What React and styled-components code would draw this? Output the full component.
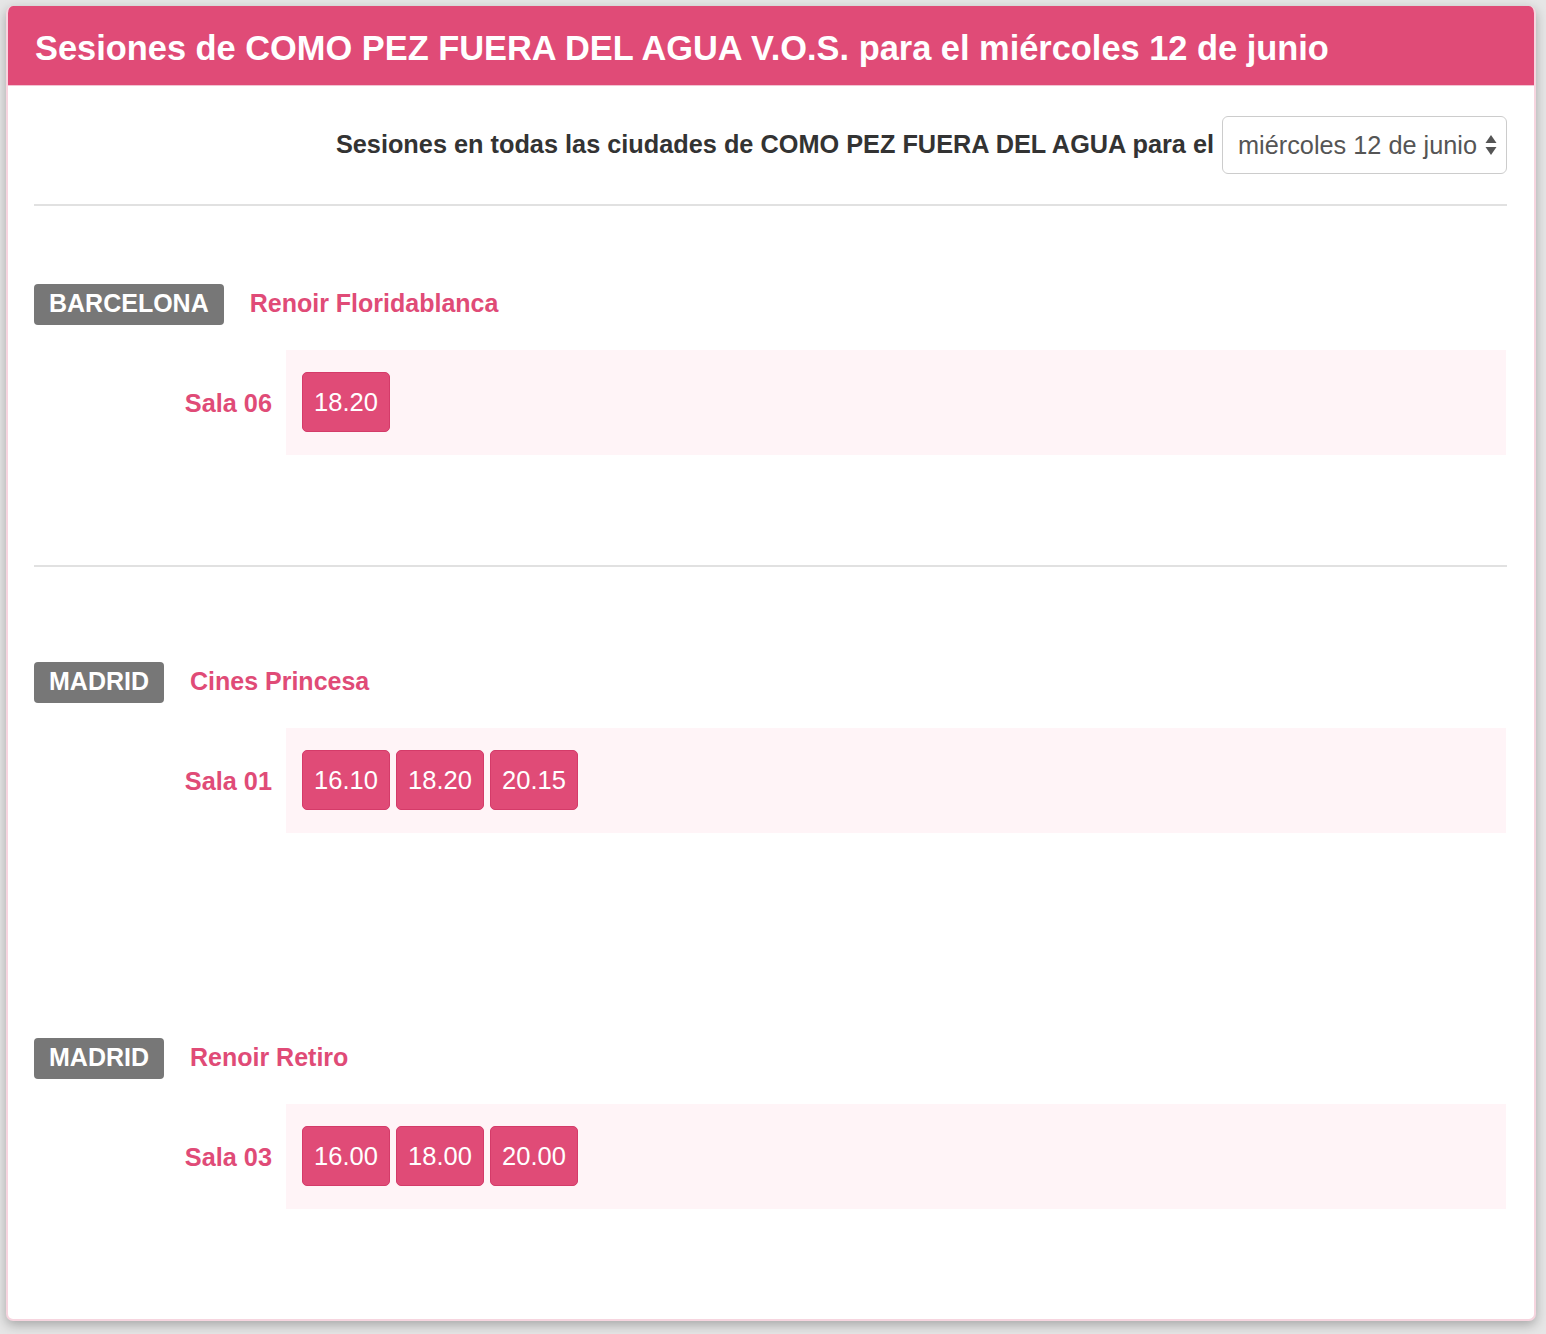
import React from "react";
import styled, { createGlobalStyle } from "styled-components";

const Global = createGlobalStyle`
  html, body { margin: 0; padding: 0; background: #e6e6e6; }
  body { font-family: "Liberation Sans", Arial, Helvetica, sans-serif; }
  * { box-sizing: border-box; }
`;

const Page = styled.div`
  padding: 6px 10px 14px 6px;
  min-height: 1334px;
`;

const Card = styled.div`
  width: 1530px;
  background: #ffffff;
  border: 2px solid #f6d5df;
  border-top: none;
  border-radius: 7px;
  box-shadow: 0 4px 12px rgba(0, 0, 0, 0.28);
  overflow: hidden;
`;

const Header = styled.div`
  background: #e04b77;
  height: 80px;
  display: flex;
  align-items: center;
  border-bottom: 1px solid #f3c3d2;
  margin: 0 -2px;
  padding: 0 27px 0 29px;
`;

const Title = styled.h1`
  margin: 0;
  color: #ffffff;
  font-size: 34.4px;
  font-weight: 700;
  padding-top: 6px;
`;

const Body = styled.div`
  padding: 0 27px 0 26px;
`;

const FilterRow = styled.div`
  display: flex;
  justify-content: flex-end;
  align-items: center;
  gap: 8px;
  padding-top: 30px;
  margin-bottom: 30px;
`;

const FilterLabel = styled.span`
  color: #333333;
  font-size: 25.3px;
  font-weight: 700;
  padding-bottom: 2px;
`;

const Select = styled.div`
  height: 58px;
  width: 285px;
  border: 1px solid #cccccc;
  border-radius: 6px;
  background: #fff;
  display: flex;
  align-items: center;
  justify-content: space-between;
  padding: 0 9px 0 15px;
  color: #555555;
  font-size: 25.3px;
`;

const Divider = styled.hr`
  margin: 0;
  border: none;
  height: 2px;
  background: #e1e1e1;
`;

const Section = styled.section`
  padding-top: ${(p) => p.$top}px;
  padding-bottom: 110px;
`;

const CinemaLine = styled.div`
  display: flex;
  align-items: center;
  gap: 26px;
`;

const City = styled.span`
  display: inline-flex;
  align-items: center;
  height: 41px;
  padding: 0 15px 2px 15px;
  background: #777777;
  color: #ffffff;
  font-size: 25px;
  font-weight: 700;
  border-radius: 4px;
`;

const CinemaLink = styled.a`
  color: #e04b77;
  font-size: 25px;
  font-weight: 700;
  text-decoration: none;
  padding-bottom: 2px;
`;

const SalaRow = styled.div`
  display: grid;
  grid-template-columns: 252px 1fr;
  margin-top: 25px;
  margin-right: 1px;
`;

const SalaName = styled.div`
  color: #e04b77;
  font-size: 25.3px;
  font-weight: 700;
  padding-right: 14px;
  display: flex;
  align-items: center;
  justify-content: flex-end;
  padding-top: 2px;
`;

const Times = styled.div`
  background: #fff4f7;
  height: 105px;
  padding: 22px 16px 23px;
  display: flex;
  gap: 6px;
`;

const TimeButton = styled.span`
  width: 88px;
  height: 60px;
  background: #e04b77;
  border: 1px solid #d43b69;
  border-radius: 5px;
  color: #ffffff;
  font-size: 25.5px;
  display: flex;
  align-items: center;
  justify-content: center;
  padding-bottom: 0;
`;

const Arrows = () => (
  <svg width="12" height="22" viewBox="0 0 12 22">
    <path d="M6 1 L11.5 9 L0.5 9 Z" fill="#555" />
    <path d="M6 21 L11.5 13 L0.5 13 Z" fill="#555" />
  </svg>
);

const data = [
  { city: "BARCELONA", cinema: "Renoir Floridablanca", sala: "Sala 06", times: ["18.20"] },
  { city: "MADRID", cinema: "Cines Princesa", sala: "Sala 01", times: ["16.10", "18.20", "20.15"] },
  { city: "MADRID", cinema: "Renoir Retiro", sala: "Sala 03", times: ["16.00", "18.00", "20.00"] },
];

export default function App() {
  return (
    <>
      <Global />
      <Page>
        <Card>
          <Header>
            <Title>Sesiones de COMO PEZ FUERA DEL AGUA V.O.S. para el miércoles 12 de junio</Title>
          </Header>
          <Body>
            <FilterRow>
              <FilterLabel>Sesiones en todas las ciudades de COMO PEZ FUERA DEL AGUA para el</FilterLabel>
              <Select>
                <span>miércoles 12 de junio</span>
                <Arrows />
              </Select>
            </FilterRow>
            <Divider />
            {data.map((d, i) => (
              <React.Fragment key={i}>
                <Section $top={i === 0 ? 78 : 95}>
                  <CinemaLine>
                    <City>{d.city}</City>
                    <CinemaLink href="#">{d.cinema}</CinemaLink>
                  </CinemaLine>
                  <SalaRow>
                    <SalaName>{d.sala}</SalaName>
                    <Times>
                      {d.times.map((t) => (
                        <TimeButton key={t}>{t}</TimeButton>
                      ))}
                    </Times>
                  </SalaRow>
                </Section>
                {i === 0 && <Divider />}
              </React.Fragment>
            ))}
          </Body>
        </Card>
      </Page>
    </>
  );
}
